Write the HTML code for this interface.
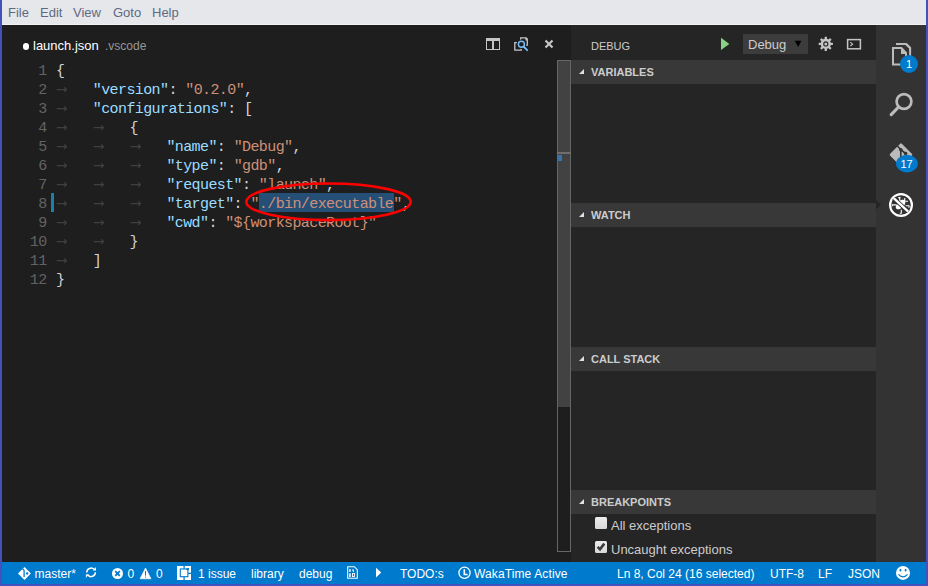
<!DOCTYPE html>
<html><head><meta charset="utf-8">
<style>
*{margin:0;padding:0;box-sizing:border-box}
html,body{width:928px;height:586px;overflow:hidden;background:#4251bb;font-family:"Liberation Sans",sans-serif}
.a{position:absolute}
#menu{left:2px;top:0;width:924px;height:24px;background:#e6e7eb}
#menuline{left:2px;top:24px;width:924px;height:1px;background:#f2f3f6}
.mi{position:absolute;top:5px;font-size:13px;line-height:16px;color:#5f6a82;white-space:nowrap}
#editor{left:2px;top:25px;width:555px;height:537px;background:#1e1e1e}
#edright{left:557px;top:25px;width:14px;height:537px;background:#1e1e1e}
#panel{left:571px;top:25px;width:305px;height:537px;background:#252526}
#act{left:876px;top:25px;width:50px;height:537px;background:#333333}
#status{left:2px;top:562px;width:924px;height:22px;background:#007acc}
.code{position:absolute;left:0;top:0;font-family:"Liberation Mono",monospace;font-size:15px;letter-spacing:-0.6px;line-height:19px;white-space:pre;color:#d4d4d4}
.ln{position:absolute;left:0;width:46.6px;text-align:right;font-family:"Liberation Mono",monospace;font-size:15px;letter-spacing:-0.6px;line-height:19px;color:#636363}
.cl{position:absolute;left:56px;height:19px}
.t{display:inline-block;width:36.8px;height:19px;vertical-align:top}
.t svg{display:block}
.k{color:#9cdcfe}
.s{color:#ce9178}
.hdr{position:absolute;left:571px;width:305px;height:24px;background:#383838}
.hdr span{position:absolute;left:20px;top:5px;font-size:11px;font-weight:bold;line-height:14px;color:#cccccc}
.hdr i{position:absolute;left:8px;top:8.5px;width:0;height:0;border-left:5.5px solid transparent;border-bottom:5.5px solid #e0e0e0}
.st{position:absolute;top:3px;font-size:12px;line-height:16px;color:#ffffff;white-space:nowrap}
</style></head><body>
<div id="menu" class="a">
  <span class="mi" style="left:6px">File</span>
  <span class="mi" style="left:38px">Edit</span>
  <span class="mi" style="left:71px">View</span>
  <span class="mi" style="left:111px">Goto</span>
  <span class="mi" style="left:150px">Help</span>
</div>
<div id="menuline" class="a"></div>
<div id="editor" class="a"></div>
<div id="edright" class="a"></div>
<div id="panel" class="a"></div>
<div id="act" class="a"></div>
<div id="status" class="a"></div>

<!-- editor title -->
<div class="a" style="left:22.8px;top:43px;width:6.5px;height:6.5px;border-radius:50%;background:#ffffff"></div>
<div class="a" style="left:33px;top:38px;font-size:13px;line-height:16px;color:#ffffff;white-space:nowrap">launch.json</div>
<div class="a" style="left:105px;top:39px;font-size:12px;line-height:14px;color:#969696;white-space:nowrap">.vscode</div>

<!-- selection -->
<div class="a" style="left:259px;top:193px;width:135px;height:19px;background:#264f78"></div>
<!-- gutter mark -->
<div class="a" style="left:51px;top:193px;width:3px;height:19px;background:#1b81a8"></div>

<!-- line numbers -->
<div class="a" style="left:0;top:62px;width:60px;height:240px">
  <div class="ln" style="top:0">1</div>
  <div class="ln" style="top:19px">2</div>
  <div class="ln" style="top:38px">3</div>
  <div class="ln" style="top:57px">4</div>
  <div class="ln" style="top:76px">5</div>
  <div class="ln" style="top:95px">6</div>
  <div class="ln" style="top:114px">7</div>
  <div class="ln" style="top:133px">8</div>
  <div class="ln" style="top:152px">9</div>
  <div class="ln" style="top:171px">10</div>
  <div class="ln" style="top:190px">11</div>
  <div class="ln" style="top:209px">12</div>
</div>
<div class="code" style="top:62px">
<div class="cl" style="top:0">{</div>
<div class="cl" style="top:19px"><span class="t"><svg width="11" height="19"><path d="M0.8 8.6H10.4M8.2 6.3L10.5 8.6L8.2 10.9" stroke="#404040" stroke-width="1.1" fill="none"/></svg></span><span class="k">"version"</span>: <span class="s">"0.2.0"</span>,</div>
<div class="cl" style="top:38px"><span class="t"><svg width="11" height="19"><path d="M0.8 8.6H10.4M8.2 6.3L10.5 8.6L8.2 10.9" stroke="#404040" stroke-width="1.1" fill="none"/></svg></span><span class="k">"configurations"</span>: [</div>
<div class="cl" style="top:57px"><span class="t"><svg width="11" height="19"><path d="M0.8 8.6H10.4M8.2 6.3L10.5 8.6L8.2 10.9" stroke="#404040" stroke-width="1.1" fill="none"/></svg></span><span class="t"><svg width="11" height="19"><path d="M0.8 8.6H10.4M8.2 6.3L10.5 8.6L8.2 10.9" stroke="#404040" stroke-width="1.1" fill="none"/></svg></span>{</div>
<div class="cl" style="top:76px"><span class="t"><svg width="11" height="19"><path d="M0.8 8.6H10.4M8.2 6.3L10.5 8.6L8.2 10.9" stroke="#404040" stroke-width="1.1" fill="none"/></svg></span><span class="t"><svg width="11" height="19"><path d="M0.8 8.6H10.4M8.2 6.3L10.5 8.6L8.2 10.9" stroke="#404040" stroke-width="1.1" fill="none"/></svg></span><span class="t"><svg width="11" height="19"><path d="M0.8 8.6H10.4M8.2 6.3L10.5 8.6L8.2 10.9" stroke="#404040" stroke-width="1.1" fill="none"/></svg></span><span class="k">"name"</span>: <span class="s">"Debug"</span>,</div>
<div class="cl" style="top:95px"><span class="t"><svg width="11" height="19"><path d="M0.8 8.6H10.4M8.2 6.3L10.5 8.6L8.2 10.9" stroke="#404040" stroke-width="1.1" fill="none"/></svg></span><span class="t"><svg width="11" height="19"><path d="M0.8 8.6H10.4M8.2 6.3L10.5 8.6L8.2 10.9" stroke="#404040" stroke-width="1.1" fill="none"/></svg></span><span class="t"><svg width="11" height="19"><path d="M0.8 8.6H10.4M8.2 6.3L10.5 8.6L8.2 10.9" stroke="#404040" stroke-width="1.1" fill="none"/></svg></span><span class="k">"type"</span>: <span class="s">"gdb"</span>,</div>
<div class="cl" style="top:114px"><span class="t"><svg width="11" height="19"><path d="M0.8 8.6H10.4M8.2 6.3L10.5 8.6L8.2 10.9" stroke="#404040" stroke-width="1.1" fill="none"/></svg></span><span class="t"><svg width="11" height="19"><path d="M0.8 8.6H10.4M8.2 6.3L10.5 8.6L8.2 10.9" stroke="#404040" stroke-width="1.1" fill="none"/></svg></span><span class="t"><svg width="11" height="19"><path d="M0.8 8.6H10.4M8.2 6.3L10.5 8.6L8.2 10.9" stroke="#404040" stroke-width="1.1" fill="none"/></svg></span><span class="k">"request"</span>: <span class="s">"launch"</span>,</div>
<div class="cl" style="top:133px"><span class="t"><svg width="11" height="19"><path d="M0.8 8.6H10.4M8.2 6.3L10.5 8.6L8.2 10.9" stroke="#404040" stroke-width="1.1" fill="none"/></svg></span><span class="t"><svg width="11" height="19"><path d="M0.8 8.6H10.4M8.2 6.3L10.5 8.6L8.2 10.9" stroke="#404040" stroke-width="1.1" fill="none"/></svg></span><span class="t"><svg width="11" height="19"><path d="M0.8 8.6H10.4M8.2 6.3L10.5 8.6L8.2 10.9" stroke="#404040" stroke-width="1.1" fill="none"/></svg></span><span class="k">"target"</span>: <span class="s">"./bin/executable"</span>,</div>
<div class="cl" style="top:152px"><span class="t"><svg width="11" height="19"><path d="M0.8 8.6H10.4M8.2 6.3L10.5 8.6L8.2 10.9" stroke="#404040" stroke-width="1.1" fill="none"/></svg></span><span class="t"><svg width="11" height="19"><path d="M0.8 8.6H10.4M8.2 6.3L10.5 8.6L8.2 10.9" stroke="#404040" stroke-width="1.1" fill="none"/></svg></span><span class="t"><svg width="11" height="19"><path d="M0.8 8.6H10.4M8.2 6.3L10.5 8.6L8.2 10.9" stroke="#404040" stroke-width="1.1" fill="none"/></svg></span><span class="k">"cwd"</span>: <span class="s">"${workspaceRoot}"</span></div>
<div class="cl" style="top:171px"><span class="t"><svg width="11" height="19"><path d="M0.8 8.6H10.4M8.2 6.3L10.5 8.6L8.2 10.9" stroke="#404040" stroke-width="1.1" fill="none"/></svg></span><span class="t"><svg width="11" height="19"><path d="M0.8 8.6H10.4M8.2 6.3L10.5 8.6L8.2 10.9" stroke="#404040" stroke-width="1.1" fill="none"/></svg></span>}</div>
<div class="cl" style="top:190px"><span class="t"><svg width="11" height="19"><path d="M0.8 8.6H10.4M8.2 6.3L10.5 8.6L8.2 10.9" stroke="#404040" stroke-width="1.1" fill="none"/></svg></span>]</div>
<div class="cl" style="top:209px">}</div>
</div>


<!-- debug toolbar -->
<div class="a" style="left:743px;top:34px;width:65px;height:20px;background:#3c3c3c"></div>
<div class="a" style="left:748px;top:37px;font-size:13px;line-height:15px;color:#cccccc;white-space:nowrap">Debug</div>
<!-- checkboxes -->
<div class="a" style="left:595px;top:517px;width:12px;height:12px;border-radius:1.5px;background:linear-gradient(#ececec,#d8d8d8)"></div>
<div class="a" style="left:595px;top:541px;width:12px;height:12px;border-radius:1.5px;background:linear-gradient(#ececec,#d8d8d8)"></div>
<div class="a" style="left:611px;top:518px;font-size:13px;line-height:15px;color:#cccccc;white-space:nowrap">All exceptions</div>
<div class="a" style="left:611px;top:542px;font-size:13px;line-height:15px;color:#cccccc;white-space:nowrap">Uncaught exceptions</div>
<!-- activity badges text -->
<svg class="a" style="left:0;top:0" width="928" height="586">
 <!-- editor actions -->
 <g fill="none" stroke="#c5c5c5">
  <rect x="486.5" y="38.5" width="13" height="11" stroke-width="1"/>
  <rect x="486" y="38" width="14" height="3" fill="#c5c5c5" stroke="none"/>
  <rect x="492" y="40" width="2" height="10" fill="#c5c5c5" stroke="none"/>
 </g>
 <g fill="none" stroke="#c5c5c5" stroke-width="1.3">
  <path d="M520.7 41V37.8H526L527.3 39.1V45.2H524.5"/>
  <path d="M518.5 42.6H514.8V50.2H521.2V47.5"/>
  <path d="M526 37.8V39.8H527.3" stroke-width="1.2"/>
 </g>
 <circle cx="521.4" cy="44.2" r="4.8" fill="#1e1e1e"/>
 <circle cx="521.4" cy="44.2" r="3" fill="none" stroke="#75beff" stroke-width="1.4"/>
 <path d="M523.6 46.5L527.2 50.2" stroke="#75beff" stroke-width="1.8" stroke-linecap="round"/>
 <path d="M545.5 40.5L552.5 47.5M552.5 40.5L545.5 47.5" stroke="#c5c5c5" stroke-width="2.2"/>
 <!-- debug toolbar -->
 <path d="M721 37.8L729.3 43.9L721 50Z" fill="#89d185"/>
 <path d="M794.8 40.8H801.4L798.1 46.9Z" fill="#000000"/>
 <g transform="translate(825.8 43.9)" fill="#c5c5c5"><rect x="-1.15" y="-7.1" width="2.3" height="3.5" rx="0.3" transform="rotate(0)"/><rect x="-1.15" y="-7.1" width="2.3" height="3.5" rx="0.3" transform="rotate(45)"/><rect x="-1.15" y="-7.1" width="2.3" height="3.5" rx="0.3" transform="rotate(90)"/><rect x="-1.15" y="-7.1" width="2.3" height="3.5" rx="0.3" transform="rotate(135)"/><rect x="-1.15" y="-7.1" width="2.3" height="3.5" rx="0.3" transform="rotate(180)"/><rect x="-1.15" y="-7.1" width="2.3" height="3.5" rx="0.3" transform="rotate(225)"/><rect x="-1.15" y="-7.1" width="2.3" height="3.5" rx="0.3" transform="rotate(270)"/><rect x="-1.15" y="-7.1" width="2.3" height="3.5" rx="0.3" transform="rotate(315)"/><circle r="5.1"/><circle r="2.6" fill="#252526"/><circle r="1.5"/></g>
 <rect x="847.6" y="39.6" width="12.8" height="9.2" fill="none" stroke="#c5c5c5" stroke-width="1.5"/>
 <path d="M850.3 42.2L852.6 44.2L850.3 46.2" fill="none" stroke="#c5c5c5" stroke-width="1.1"/>
 <!-- section triangles are html -->
 <!-- checkmark -->
 <path d="M597.6 546.8L600 549.3L604.3 543.6" fill="none" stroke="#3c3c3c" stroke-width="2.6"/>
 <!-- activity bar -->
 <g fill="none" stroke="#bbbbbb" stroke-width="2">
  <path d="M896 43.9H906.3L910.1 47.7V56"/>
  <path d="M893 48V64.6H906V53L901.4 48Z"/>
 </g>
 <path d="M901 47.5V54H907Z" fill="#bbbbbb"/>
 <path d="M905.8 42.9L911.1 48.2V50.5L909.1 50.5V48.6L905.4 44.9H905Z" fill="#bbbbbb"/>
 <circle cx="909" cy="64" r="9" fill="#007acc"/>
 <circle cx="904" cy="101.5" r="7.4" fill="none" stroke="#bbbbbb" stroke-width="2.7"/>
 <path d="M898.6 107L891.2 114.6" stroke="#bbbbbb" stroke-width="3.2" stroke-linecap="round"/>
 <g transform="translate(901 154.7) rotate(45)">
  <rect x="-8.4" y="-8.4" width="16.8" height="16.8" rx="1.5" fill="#bbbbbb"/>
 </g>
 <path d="M897.5 146L900.8 149.7V161M900.8 149.7L905.6 153.5" stroke="#333333" stroke-width="1.6" fill="none"/>
 <circle cx="900.8" cy="149.7" r="1.8" fill="#333333"/>
 <circle cx="905.6" cy="153.5" r="1.8" fill="#333333"/>
 <ellipse cx="907" cy="163.6" rx="11" ry="8.8" fill="#007acc"/>
 <!-- active indicator -->
 <path d="M876 200L881 204.7L876 209.4Z" fill="#252526"/>
 <!-- debug icon -->
 <circle cx="901" cy="205" r="10.9" fill="none" stroke="#ffffff" stroke-width="2.2"/>
 <g fill="#ffffff" stroke="#ffffff">
  <ellipse cx="900.6" cy="204.5" rx="6" ry="3.3" transform="rotate(-45 900.6 204.5)" stroke="none"/>
  <path d="M898.2 197.6H900.6M899.7 197.6V201.5M904.7 197.9V201M905.2 201.3H908M905.6 205.8H909V207.8M892.3 206.2V204.9H896M901.3 209.8V213.5M899.9 213.2H901.5" stroke-width="1.1" fill="none"/>
 </g>
 <path d="M893.7 198.2L908.2 211.7" stroke="#333333" stroke-width="4.2"/>
 <path d="M893.7 198.2L908.2 211.7" stroke="#ffffff" stroke-width="2.3"/>
 <!-- status bar icons -->
 <path d="M24.5 566.9L30.9 573.4L24.5 579.9L18 573.4Z" fill="#ffffff"/>
 <path d="M22.6 568.8L24.1 570.4V577" stroke="#007acc" stroke-width="1.3" fill="none"/>
 <circle cx="27.1" cy="573.4" r="1.2" fill="#007acc"/>
 <g fill="none" stroke="#ffffff" stroke-width="1.5">
  <path d="M86.8 572.6A4.3 4.3 0 0 1 94.3 569.6"/>
  <path d="M95.4 572.3A4.3 4.3 0 0 1 88 575.3"/>
 </g>
 <path d="M92.8 570.5H96V567Z" fill="#ffffff"/>
 <path d="M85.9 574.2H89.1L85.9 577.8Z" fill="#ffffff"/>
 <circle cx="117.5" cy="573.5" r="5.5" fill="#ffffff"/>
 <path d="M115.2 571.2L119.8 575.8M119.8 571.2L115.2 575.8" stroke="#007acc" stroke-width="1.8"/>
 <path d="M145.5 568L151 578.8H140Z" fill="#ffffff" stroke="#ffffff" stroke-width="0.6" stroke-linejoin="round"/>
 <path d="M145.5 571V575.6M145.5 576.6V577.6" stroke="#007acc" stroke-width="1.0"/>
 <rect x="177" y="566" width="14" height="14" fill="#ffffff"/>
 <rect x="180.3" y="569" width="7.6" height="7.7" fill="#ffffff" stroke="#007acc" stroke-width="1.1"/>
 <path d="M184.1 566V569M184.1 576.7V580M187.9 573.4H191" stroke="#007acc" stroke-width="1.2"/>
 <rect x="186.5" y="568" width="2.4" height="2.2" fill="#007acc"/>
 <path d="M347.7 566.7H354.3L357.3 569.7V578.3H347.7Z" fill="none" stroke="#ffffff" stroke-width="1.05"/>
 <g fill="#ffffff"><rect x="349" y="569.2" width="1.9" height="2.6" opacity="0.8"/><rect x="349" y="573.3" width="1.9" height="3.8" opacity="0.8"/><path d="M352 569.4H353.8V572H352.9V570.4H352Z"/></g><rect x="352.5" y="573.5" width="1.9" height="3.1" fill="none" stroke="#ffffff" stroke-width="0.9"/>
 <path d="M376 567.7L381.2 572.6L376 577.6Z" fill="#ffffff"/>
 <circle cx="464.5" cy="572.8" r="5.6" fill="none" stroke="#ffffff" stroke-width="1.3"/>
 <path d="M464.3 569.3V574.5H467.6" fill="none" stroke="#ffffff" stroke-width="1.6"/>
 <circle cx="903" cy="572.9" r="7" fill="#ffffff"/>
 <ellipse cx="900.4" cy="570.2" rx="0.9" ry="1.4" fill="#007acc"/>
 <ellipse cx="905.6" cy="570.2" rx="0.9" ry="1.4" fill="#007acc"/>
 <path d="M898.5 574.3Q903 579.5 907.5 574.3" fill="none" stroke="#007acc" stroke-width="1.2"/>
</svg>
<div class="a" style="left:904px;top:58px;width:10px;font-size:11px;line-height:13px;color:#ffffff;text-align:center">1</div>
<div class="a" style="left:899.5px;top:158px;width:14px;font-size:11px;line-height:13px;color:#ffffff;text-align:center">17</div>


<!-- scrollbar -->
<div class="a" style="left:557px;top:60px;width:14px;height:492px;border:1px solid #666666"></div>
<div class="a" style="left:558px;top:61px;width:12px;height:346px;background:#424242"></div>
<div class="a" style="left:557px;top:152px;width:14px;height:2px;background:#6e6e6e"></div>
<div class="a" style="left:558px;top:155px;width:4px;height:6px;background:#3a72a5"></div>

<!-- debug panel -->
<div class="a" style="left:591px;top:39px;font-size:11px;line-height:14px;color:#cccccc">DEBUG</div>
<div class="hdr" style="top:60px"><i></i><span>VARIABLES</span></div>
<div class="hdr" style="top:203px"><i></i><span>WATCH</span></div>
<div class="hdr" style="top:347px"><i></i><span>CALL STACK</span></div>
<div class="hdr" style="top:490px"><i></i><span>BREAKPOINTS</span></div>

<!-- status -->
<div class="st" style="left:34.5px;top:565.6px">master*</div>
<div class="st" style="left:127.5px;top:565.6px">0</div>
<div class="st" style="left:156px;top:565.6px">0</div>
<div class="st" style="left:198px;top:565.6px">1 issue</div>
<div class="st" style="left:251px;top:565.6px">library</div>
<div class="st" style="left:299px;top:565.6px">debug</div>
<div class="st" style="left:400px;top:565.6px">TODO:s</div>
<div class="st" style="left:474px;top:565.6px;letter-spacing:0.12px">WakaTime Active</div>
<div class="st" style="left:617px;top:565.6px">Ln 8, Col 24 (16 selected)</div>
<div class="st" style="left:770px;top:565.6px">UTF-8</div>
<div class="st" style="left:818px;top:565.6px">LF</div>
<div class="st" style="left:848px;top:565.6px">JSON</div>
<!-- red ellipse -->
<svg class="a" style="left:0;top:0" width="928" height="586"><ellipse cx="328.5" cy="201.8" rx="82.2" ry="18.3" fill="none" stroke="#ff0000" stroke-width="2.6"/></svg>
</body></html>
